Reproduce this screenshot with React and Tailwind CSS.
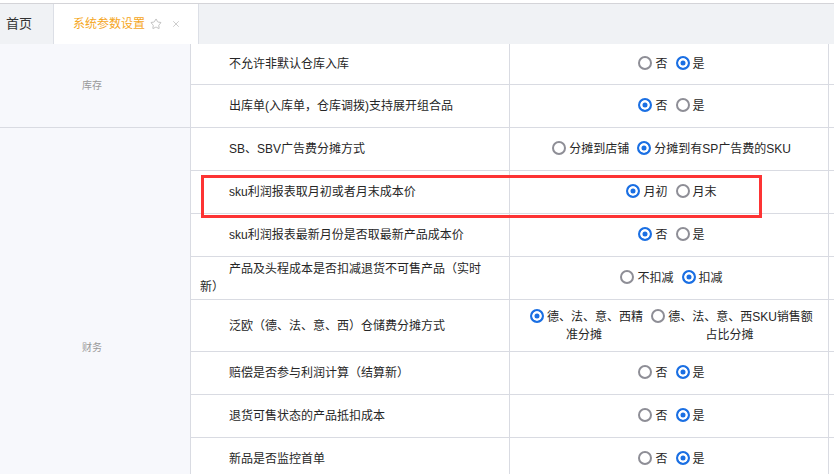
import React from 'react';
import { Star, X } from 'lucide-react';

const Radio = ({ checked }) =>
  checked ? (
    <span className="inline-block w-[14px] h-[14px] rounded-full border-2 border-[#1a6fe3] bg-[#1a6fe3] shadow-[inset_0_0_0_2.5px_#fff] ml-[5px] mr-[3px] align-[-2px]" />
  ) : (
    <span className="inline-block w-[14px] h-[14px] rounded-full border-2 border-[#8e8e96] bg-white ml-[5px] mr-[3px] align-[-2px]" />
  );

const rows = [
  { label: '不允许非默认仓库入库', options: ['否', '是'], value: 1, h: 'h-[41px]' },
  { label: '出库单(入库单，仓库调拨)支持展开组合品', options: ['否', '是'], value: 0 },
  { label: 'SB、SBV广告费分摊方式', options: ['分摊到店铺', '分摊到有SP广告费的SKU'], value: 1 },
  { label: 'sku利润报表取月初或者月末成本价', options: ['月初', '月末'], value: 0 },
  { label: 'sku利润报表最新月份是否取最新产品成本价', options: ['否', '是'], value: 0 },
  { label: '产品及头程成本是否扣减退货不可售产品（实时新）', options: ['不扣减', '扣减'], value: 1, pr: 'pr-[22px]' },
  {
    label: '泛欧（德、法、意、西）仓储费分摊方式',
    options: ['德、法、意、西精准分摊', '德、法、意、西SKU销售额占比分摊'],
    widths: ['w-[118px]', 'w-[167px]'],
    value: 0,
    h: 'h-[52px]',
  },
  { label: '赔偿是否参与利润计算（结算新）', options: ['否', '是'], value: 1 },
  { label: '退货可售状态的产品抵扣成本', options: ['否', '是'], value: 1 },
  { label: '新品是否监控首单', options: ['否', '是'], value: 1 },
];

const App = () => {
  return (
    <div className="relative w-[834px] h-[474px] overflow-hidden bg-white text-[12px] text-[#262626] font-['Liberation_Sans','Noto_Sans_CJK_SC',sans-serif]">
      {/* Tab bar */}
      <div className="pt-[3px]">
        <div className="h-[41px] border-t border-[#d4d4d8] bg-[#f0f2f5] flex items-stretch">
          <div className="w-[53px] pl-[6px] flex items-center text-[13px] text-[#333]">首页</div>
          <div className="w-[146px] bg-white border-x border-[#dcdfe6] pl-[19px] flex items-center">
            <span className="text-[#f5a623]">系统参数设置</span>
            <Star size={12} strokeWidth={1.4} className="ml-[5px] text-[#a8a8a8]" />
            <X size={10} strokeWidth={1.4} className="ml-[9px] text-[#a8a8a8]" />
          </div>
        </div>
      </div>

      {/* Settings table */}
      <div className="flex">
        <div className="w-[191px] shrink-0 border-r border-[#d9dbe2] bg-[#f7f8fc] text-[10px] text-[#999]">
          <div className="h-[84px] border-b border-[#d9dbe2] flex items-center justify-center pr-[6px]">库存</div>
          <div className="h-[439px] border-b border-[#d9dbe2] flex items-center justify-center pr-[6px]">财务</div>
        </div>
        <div className="flex-1">
          {rows.map((row, i) => (
            <div key={i} className={`flex border-b border-[#d9dbe2] ${row.h || 'h-[43px]'}`}>
              <div className={`w-[319px] shrink-0 border-r border-[#d9dbe2] pl-[9px] ${row.pr || 'pr-[8px]'} flex items-center`}>
                <p className="indent-[29px] leading-[18px]">{row.label}</p>
              </div>
              <div className="w-[319px] shrink-0 border-r border-[#d9dbe2] flex items-center justify-center gap-[3px] leading-[18px]">
                {row.options.map((opt, j) => (
                  <label key={j} className={`${row.widths ? row.widths[j] + ' text-center' : 'whitespace-nowrap'}`}>
                    <Radio checked={row.value === j} />
                    {opt}
                  </label>
                ))}
              </div>
              <div className="flex-1" />
            </div>
          ))}
        </div>
      </div>

      {/* Annotation box */}
      <div className="absolute left-[201px] top-[175px] w-[561px] h-[43px] border-[3px] border-[#fd3434]" />
    </div>
  );
};

export default App;
